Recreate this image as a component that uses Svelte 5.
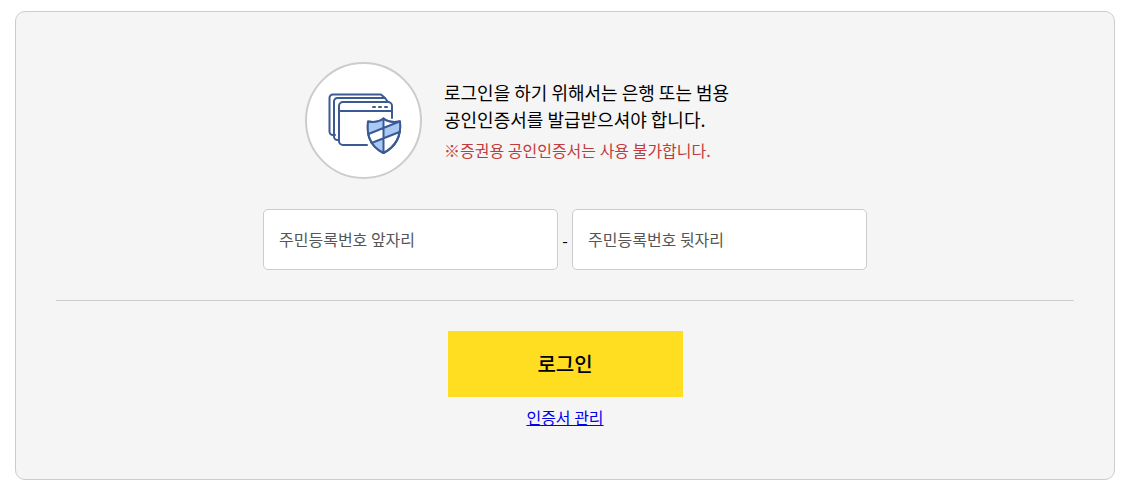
<script lang="ts">
    let front = $state('')
    let back = $state('')
</script>

<div class="card">
    <div class="intro">
        <div class="badge">
            <svg width="113" height="113" viewBox="2 2 113 113" fill="none" stroke="#3b5a94" stroke-width="2" stroke-linejoin="round" stroke-linecap="round">
                <!-- stacked windows -->
                <path d="M30 73 h-2 a3.500 3.500 0 0 1 -3.500 -3.500 V36 a3.500 3.500 0 0 1 3.500 -3.500 H76 l4 3.500" />
                <path d="M34 78 h-1.500 a3.500 3.500 0 0 1 -3.500 -3.500 V39.500 a3.500 3.500 0 0 1 3.500 -3.500 H80 l3 4" />
                <path d="M62 83 H38 a4 4 0 0 1 -4 -4 V44 a4 4 0 0 1 4 -4 H83 a4 4 0 0 1 4 4 V56" />
                <path d="M34 49 H87" />
                <path d="M68 45 h2 M74 45 h2 M80 45 h2" />
                <!-- shield -->
                <path d="M78.500 56.500 C74 60 68 60.500 63 59.500 C62 70 62.500 83 78.500 91 C94 83 96 70 95 59.500 C89.500 60.500 83 60 78.500 56.500 Z" fill="#fff" />
                <path d="M78.500 56.500 C74 60 68 60.500 63 59.500 C62.700 64 62.600 68 63.500 72 L78.500 66 Z" fill="#a9c9f5" stroke="none" />
                <path d="M78.500 66 L95 59.500 C95.300 63 95.300 66.500 94.500 70 L78.500 76.500 Z" fill="#a9c9f5" stroke="none" />
                <path d="M78.500 76.500 L66.500 81 C69.500 85 73.500 88.500 78.500 91 Z" fill="#a9c9f5" stroke="none" />
                <path d="M78.500 56.500 C74 60 68 60.500 63 59.500 C62 70 62.500 83 78.500 91 C94 83 96 70 95 59.500 C89.500 60.500 83 60 78.500 56.500 Z" />
                <path d="M78.500 56.500 V91 M63.500 72 L94.500 59.500 M66.500 81 L94.500 70" />
            </svg>
        </div>
        <div class="copy">
            <p class="lead">로그인을 하기 위해서는 은행 또는 범용<br />공인인증서를 발급받으셔야 합니다.</p>
            <p class="warn">※증권용 공인인증서는 사용 불가합니다.</p>
        </div>
    </div>

    <div class="fields">
        <input type="text" placeholder="주민등록번호 앞자리" bind:value={front} />
        <span class="dash">-</span>
        <input type="password" placeholder="주민등록번호 뒷자리" bind:value={back} />
    </div>

    <hr />

    <div class="actions">
        <button type="button">로그인</button>
        <a href="#cert">인증서 관리</a>
    </div>
</div>

<style>
    :global(body) {
        margin: 0;
        background: #fff;
    }
    .card {
        box-sizing: border-box;
        width: 1100px;
        height: 469px;
        margin: 11px 0 0 15px;
        padding: 50px 40px 0;
        background: #f5f5f5;
        border: 1px solid #ccc;
        border-radius: 10px;
        font-family: "Noto Sans CJK KR", "Noto Sans", sans-serif;
    }
    .intro {
        display: flex;
        align-items: center;
        justify-content: center;
        gap: 22px;
        padding-right: 1px;
    }
    .badge {
        width: 117px;
        height: 117px;
        box-sizing: border-box;
        border: 2px solid #ccc;
        border-radius: 50%;
        background: #fff;
        flex-shrink: 0;
        display: flex;
        align-items: center;
        justify-content: center;
    }
    .badge svg { display: block; }
    .copy {
        width: 380px;
        margin-top: -2px;
    }
    .copy p { margin: 0; }
    .lead {
        font-size: 18px;
        line-height: 27px;
        color: #000;
    }
    .warn {
        margin-top: 6px !important;
        font-size: 16px;
        line-height: 22px;
        color: #c23b3b;
    }
    .fields {
        display: flex;
        align-items: center;
        justify-content: center;
        margin-top: 30px;
    }
    input {
        box-sizing: border-box;
        width: 295px;
        height: 61px;
        padding: 0 15px 2px;
        background: #fff;
        border: 1px solid #ccc;
        border-radius: 5px;
        font-family: inherit;
        font-size: 16px;
        outline: none;
    }
    input::placeholder {
        color: #555;
        opacity: 1;
    }
    .dash {
        width: 14px;
        text-align: center;
        font-size: 16px;
        color: #000;
    }
    hr {
        margin: 30px 0 0;
        border: 0;
        border-top: 1px solid #ccc;
    }
    .actions {
        display: flex;
        flex-direction: column;
        align-items: center;
        margin-top: 30px;
    }
    button {
        width: 235px;
        height: 66px;
        padding: 0 0 2px;
        background: #ffdd21;
        border: 0;
        font-family: inherit;
        font-size: 20px;
        font-weight: 500;
        color: #000;
    }
    a {
        margin-top: 9px;
        font-size: 16px;
        line-height: 22px;
        color: #00e;
    }
</style>
